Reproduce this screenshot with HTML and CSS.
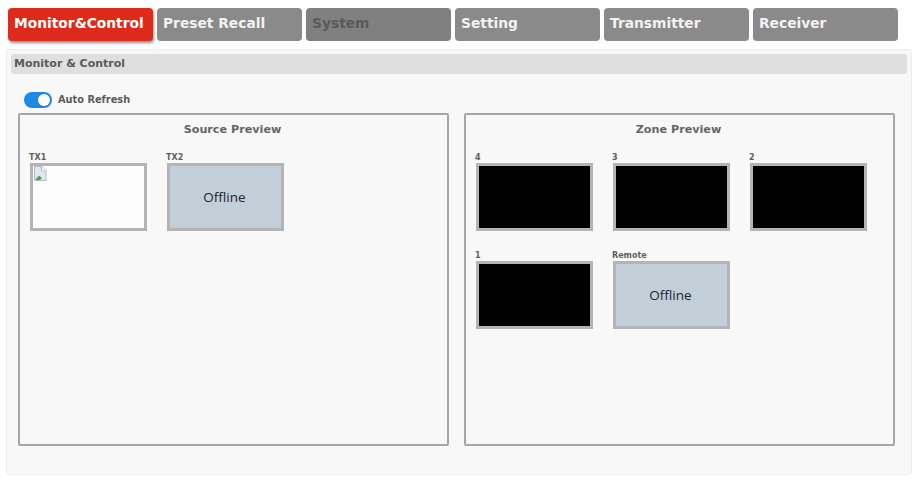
FILE: index.html
```html
<!DOCTYPE html>
<html lang="en">
<head>
<meta charset="utf-8">
<title>Monitor &amp; Control</title>
<link rel="stylesheet" href="styles.css">
</head>
<body>
<nav class="tabs">
  <a class="tab tab-active">Monitor&amp;Control</a>
  <a class="tab">Preset Recall</a>
  <a class="tab tab-disabled">System</a>
  <a class="tab">Setting</a>
  <a class="tab">Transmitter</a>
  <a class="tab">Receiver</a>
</nav>
<main class="panel">
  <h1 class="panel-head">Monitor &amp; Control</h1>
  <div class="refresh">
    <span class="toggle"><span class="knob"></span></span>
    <span class="refresh-label">Auto Refresh</span>
  </div>
  <div class="previews">
    <section class="box">
      <h2 class="box-title">Source Preview</h2>
      <div class="grid">
        <figure class="item">
          <figcaption class="cap">TX1</figcaption>
          <div class="thumb thumb-empty">
            <svg class="broken" width="15" height="16" viewBox="0 0 15 16">
              <path d="M1.5 .5H9L13 4.500V14.500H1.500Z" fill="#dfe7f5" stroke="#b4bccb"/>
              <path d="M2 14L6 9.500L9 12L7 14Z" fill="#4aa83c"/>
              <path d="M8.500 1V5H13" fill="#fff" stroke="#b4bccb"/>
            </svg>
          </div>
        </figure>
        <figure class="item">
          <figcaption class="cap">TX2</figcaption>
          <div class="thumb thumb-off">Offline</div>
        </figure>
      </div>
    </section>
    <section class="box">
      <h2 class="box-title">Zone Preview</h2>
      <div class="grid">
        <figure class="item"><figcaption class="cap">4</figcaption><div class="thumb thumb-black"></div></figure>
        <figure class="item"><figcaption class="cap">3</figcaption><div class="thumb thumb-black"></div></figure>
        <figure class="item"><figcaption class="cap">2</figcaption><div class="thumb thumb-black"></div></figure>
        <figure class="item"><figcaption class="cap">1</figcaption><div class="thumb thumb-black"></div></figure>
        <figure class="item"><figcaption class="cap">Remote</figcaption><div class="thumb thumb-off">Offline</div></figure>
      </div>
    </section>
  </div>
</main>
</body>
</html>
```
FILE: styles.css
```css
* { box-sizing: border-box; }
html, body { margin: 0; height: 100%; }
body {
  width: 921px;
  height: 483px;
  overflow: hidden;
  background: #fff;
  padding: 8px 0 0;
  font-family: "DejaVu Sans", Verdana, sans-serif;
}
.tabs {
  display: flex;
  gap: 4px;
  padding-left: 8px;
  height: 33px;
}
.tab {
  width: 145px;
  height: 33px;
  padding: 6px 6px 0;
  border-radius: 4px;
  background: #8a8a8a;
  color: #f2f2f2;
  font-size: 13.800px;
  font-weight: 700;
  line-height: 18px;
  white-space: nowrap;
}
.tab-active {
  background: #dd2a1a;
  color: #fff;
  box-shadow: 1px 2px 3px rgba(0, 0, 0, .45);
}
.tab-disabled {
  background: #808080;
  color: #5a5a5a;
}
.panel {
  width: 906px;
  height: 426px;
  margin: 8px 0 0 6px;
  padding: 4px 4px 0;
  background: #f8f8f8;
  border: 1px solid #ececec;
  border-radius: 4px;
}
.panel-head {
  margin: 0;
  height: 20px;
  padding-left: 3px;
  background: #dfdfdf;
  border-radius: 3px;
  color: #5a5a5a;
  font-size: 11px;
  font-weight: 700;
  line-height: 20px;
}
.refresh {
  display: flex;
  align-items: center;
  gap: 6px;
  height: 16px;
  margin: 18px 0 0 13px;
}
.toggle {
  display: flex;
  justify-content: flex-end;
  align-items: center;
  width: 28px;
  height: 16px;
  padding: 2px;
  border-radius: 8px;
  background: #1e88e5;
}
.knob {
  width: 12px;
  height: 12px;
  border-radius: 50%;
  background: #fff;
}
.refresh-label {
  margin-top: -2px;
  color: #5a5a5a;
  font-size: 9.800px;
  font-weight: 700;
}
.previews {
  display: flex;
  gap: 15px;
  margin: 5px 0 0 7px;
}
.box {
  width: 431px;
  height: 333px;
  padding: 0 10px;
  border: 2px solid #a6a6a6;
  border-radius: 2px;
}
.box-title {
  margin: 0;
  padding: 8px 2px 0 0;
  height: 35px;
  text-align: center;
  color: #666;
  font-size: 11.200px;
  font-weight: 700;
  line-height: 14px;
}
.grid {
  display: flex;
  flex-wrap: wrap;
  column-gap: 20px;
  row-gap: 17px;
  height: 180px;
  align-content: flex-start;
}
.item {
  margin: 0;
  width: 117px;
}
.cap {
  height: 13px;
  margin-left: -1px;
  padding-top: 3px;
  color: #5f5f5f;
  font-size: 8px;
  font-weight: 700;
  line-height: 10px;
}
.thumb {
  width: 117px;
  height: 68px;
  border: 3px solid #b4b4b4;
}
.thumb-empty {
  background: #fdfdfd;
  padding: 0;
}
.broken { display: block; }
.thumb-off {
  padding-right: 2px;
  background: #c2ced8;
  color: #1a2530;
  font-family: "Open Sans", "Noto Sans", sans-serif;
  font-size: 13.500px;
  line-height: 62px;
  text-align: center;
}
.thumb-black { background: #000; }
```
